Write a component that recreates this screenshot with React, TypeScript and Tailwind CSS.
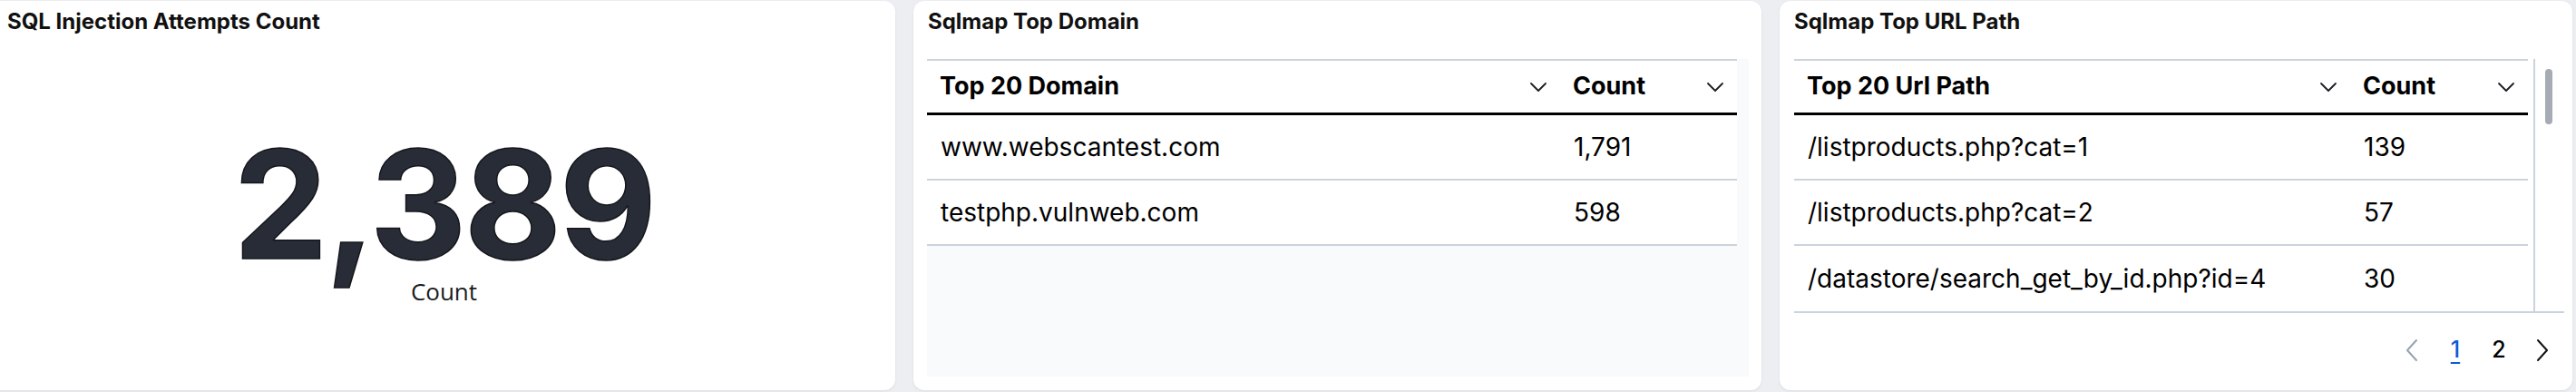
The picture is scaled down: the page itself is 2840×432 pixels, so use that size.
import React from 'react';

const Chevron: React.FC = () => (
  <svg width="20" height="12" viewBox="0 0 20 12" fill="none" className="shrink-0">
    <path d="M2 2 L10 10 L18 2" stroke="#1a1c21" strokeWidth="1.8" strokeLinecap="round" strokeLinejoin="round" />
  </svg>
);

const PageArrow: React.FC<{ dir: 'left' | 'right'; disabled?: boolean }> = ({ dir, disabled }) => (
  <svg width="14" height="26" viewBox="0 0 14 26" fill="none">
    <path
      d={dir === 'left' ? 'M12 2 L2 13 L12 24' : 'M2 2 L12 13 L2 24'}
      stroke={disabled ? '#98a2b3' : '#111111'}
      strokeWidth="2"
      strokeLinecap="round"
      strokeLinejoin="round"
    />
  </svg>
);

interface Row {
  label: string;
  count: string;
}

const domains: Row[] = [
  { label: 'www.webscantest.com', count: '1,791' },
  { label: 'testphp.vulnweb.com', count: '598' },
];

const paths: Row[] = [
  { label: '/listproducts.php?cat=1', count: '139' },
  { label: '/listproducts.php?cat=2', count: '57' },
  { label: '/datastore/search_get_by_id.php?id=4', count: '30' },
];

const PanelTitle: React.FC<{ children: React.ReactNode }> = ({ children }) => (
  <h2 className="text-[24px] leading-[28px] font-bold text-[#111]">{children}</h2>
);

const TableHeader: React.FC<{ first: string; col1: string; col2: string }> = ({ first, col1, col2 }) => (
  <div className="flex h-[62px] border-t-2 border-b-[3px] border-t-[#cbd3df] border-b-black">
    <div className={`${col1} flex items-center justify-between px-[14px]`}>
      <span className="text-[27px] font-bold text-black">{first}</span>
      <Chevron />
    </div>
    <div className={`${col2} flex items-center justify-between px-[14px]`}>
      <span className="text-[27px] font-bold text-black">Count</span>
      <Chevron />
    </div>
  </div>
);

const TableRow: React.FC<{ row: Row; col1: string; col2: string; last?: boolean }> = ({ row, col1, col2, last }) => (
  <div className={`flex h-[72px] ${last ? '' : 'border-b-2 border-[#cbd3df]'}`}>
    <div className={`${col1} flex items-center px-[15px] text-[28px] text-black whitespace-nowrap`}>{row.label}</div>
    <div className={`${col2} flex items-center px-[15px] text-[28px] text-black`}>{row.count}</div>
  </div>
);

export default function App() {
  return (
    <div className="w-[2840px] h-[432px] bg-[#eceef2] flex gap-[20px] pt-[1px] overflow-hidden font-['Inter',sans-serif]">
      {/* metric panel */}
      <div className="w-[997px] -ml-[10px] h-[429px] bg-white rounded-[12px] shadow-[0_1px_3px_rgba(0,0,0,0.08)] pl-[18px] pr-[16px] pt-[9px] flex flex-col shrink-0">
        <PanelTitle>SQL Injection Attempts Count</PanelTitle>
        <div className="flex flex-col items-center mt-[112px]">
          <div className="text-[165px] leading-[150px] font-bold text-[#282c37] tracking-[-0.015em] [-webkit-text-stroke:1.5px_#14161b]">
            2,389
          </div>
          <div className="font-['Open_Sans',sans-serif] text-[26px] leading-[30px] text-[#1a1c21] mt-[6px]">Count</div>
        </div>
      </div>

      {/* top domain panel */}
      <div className="w-[935px] h-[429px] bg-white rounded-[12px] shadow-[0_1px_3px_rgba(0,0,0,0.08)] pl-[15px] pr-[14px] pt-[9px] pb-[15px] flex flex-col shrink-0">
        <div className="pl-[1px]">
          <PanelTitle>Sqlmap Top Domain</PanelTitle>
        </div>
        <div className="mt-[27px] flex-1 bg-[#f9fafc]">
          <div className="w-[893px] bg-white">
            <TableHeader first="Top 20 Domain" col1="w-[698px]" col2="w-[195px]" />
            {domains.map((r) => (
              <TableRow key={r.label} row={r} col1="w-[698px]" col2="w-[195px]" />
            ))}
          </div>
        </div>
      </div>

      {/* top url path panel */}
      <div className="w-[874px] h-[429px] bg-white rounded-[12px] shadow-[0_1px_3px_rgba(0,0,0,0.08)] pl-[16px] pr-[9px] pt-[9px] flex flex-col shrink-0">
        <PanelTitle>Sqlmap Top URL Path</PanelTitle>
        <div className="mt-[27px] h-[280px] flex border-b-2 border-[#cbd3df]">
          <div className="w-[809px] overflow-hidden">
            <TableHeader first="Top 20 Url Path" col1="w-[613px]" col2="w-[196px]" />
            {paths.map((r, i) => (
              <TableRow key={r.label} row={r} col1="w-[613px]" col2="w-[196px]" last={i === paths.length - 1} />
            ))}
          </div>
          <div className="w-[6px]" />
          <div className="border-l-2 border-[#cbd3df] flex-1 pl-[11px] pt-[11px]">
            <div className="w-[8px] h-[61px] rounded-full bg-[#a7abb3]" />
          </div>
        </div>
        <div className="mt-[17px] h-[48px] flex items-center justify-end">
          <div className="w-[48px] flex justify-center">
            <PageArrow dir="left" disabled />
          </div>
          <div className="w-[48px] flex justify-center">
            <span className="text-[25px] font-medium text-[#0b5cd5] underline decoration-2 underline-offset-[5px]">1</span>
          </div>
          <div className="w-[48px] flex justify-center">
            <span className="text-[25px] font-medium text-black">2</span>
          </div>
          <div className="w-[48px] flex justify-center">
            <PageArrow dir="right" />
          </div>
        </div>
      </div>
    </div>
  );
}
